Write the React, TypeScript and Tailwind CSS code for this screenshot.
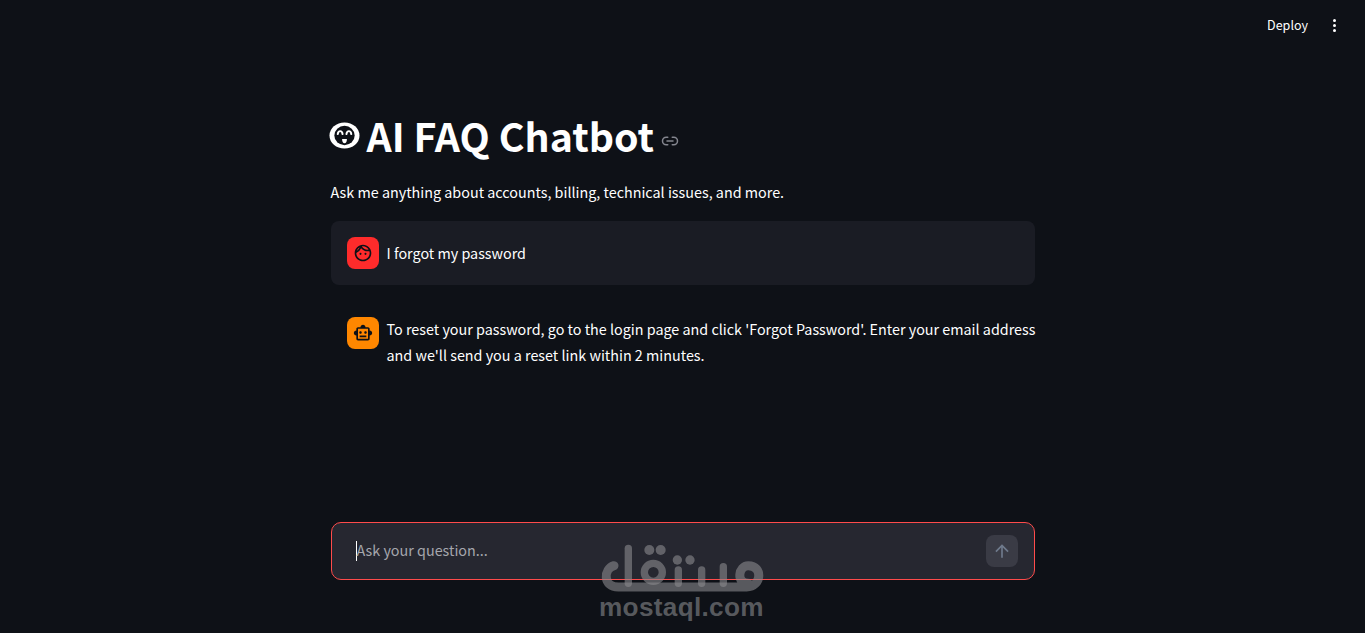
import { Link2 } from "lucide-react";
import { MdArrowUpward, MdOutlineFace, MdOutlineSmartToy } from "react-icons/md";

const RobotEmoji = () => (
  <svg viewBox="0 0 32 32" className="-ml-[2px] mt-[1px] h-[31px] w-[31px] shrink-0">
    <ellipse cx="16" cy="16" rx="15.5" ry="13.5" fill="#fff" />
    <ellipse cx="16" cy="16" rx="10.5" ry="10" fill="#0e1117" />
    <path d="M9 14.500c.6-4 4.500-4 5 0M18 14.500c.6-4 4.500-4 5 0" fill="none" stroke="#fff" strokeWidth="2" strokeLinecap="round" />
    <path d="M13.500 19.500h5c0 2.500-.8 4.500-2.500 4.500s-2.500-2-2.500-4.500z" fill="#fff" />
  </svg>
);

const Watermark = () => (
  <div className="pointer-events-none absolute left-[590px] top-[515px] h-[115px] w-[190px]">
    <svg viewBox="0 0 570 345" className="h-[115px] w-[190px]">
      <g fill="none" stroke="#8a8b8e" strokeOpacity="0.6" strokeWidth="22" strokeLinecap="round" strokeLinejoin="round">
        <path strokeWidth="27" d="M72 152C40 162 38 216 85 216H470C515 216 520 152 475 152C445 152 437 205 475 205" />
        <path d="M115 100V205" />
        <circle cx="190" cy="172" r="27" />
        <path d="M265 165V205M335 165V205M400 155V205" />
      </g>
      <g fill="#8a8b8e" fillOpacity="0.6">
        <circle cx="178" cy="105" r="15" />
        <circle cx="212" cy="105" r="15" />
        <circle cx="262" cy="135" r="14" />
        <circle cx="300" cy="135" r="14" />
      </g>
    </svg>
    <span className="absolute left-[9px] top-[77px] font-['Liberation_Sans',sans-serif] text-[26.2px] font-bold leading-[30px] tracking-[0.3px] whitespace-nowrap text-[#8a8b8e]/60">
      mostaql.com
    </span>
  </div>
);

const ChatMessage = ({ icon, color, children, filled }: { icon: React.ReactNode; color: string; children: React.ReactNode; filled?: boolean }) => (
  <div className={`flex gap-2 rounded-lg py-4 pl-4 ${filled ? "bg-[#1a1c24] pr-4" : ""}`}>
    <div className={`flex h-8 w-8 shrink-0 items-center justify-center rounded-lg text-[20px] text-[#0e1117] ${color}`}>
      {icon}
    </div>
    <p className={`min-h-8 flex-1 text-[14.35px] leading-[26px] text-white ${filled ? "pt-[3px]" : "-mr-1 -mt-px"}`}>{children}</p>
  </div>
);

const App = () => {
  return (
    <div className="relative flex h-[633px] flex-col overflow-hidden bg-[#0e1117] font-['Noto_Sans_CJK_SC','Noto_Sans',sans-serif] text-white">
      <header className="flex h-[50px] shrink-0 items-center justify-end pr-[19px]">
        <span className="mr-[14px] text-[12.53px] leading-[20px]">Deploy</span>
        <div className="flex h-8 w-[24px] flex-col items-center justify-center gap-[2px]">
          <span className="h-[3px] w-[3px] rounded-full bg-white" />
          <span className="h-[3px] w-[3px] rounded-full bg-white" />
          <span className="h-[3px] w-[3px] rounded-full bg-white" />
        </div>
      </header>

      <main className="mx-auto flex w-[704px] flex-1 flex-col">
        <div className="mt-[57px] flex h-[56px] items-center">
          <RobotEmoji />
          <h1 className="ml-[7px] text-[39.3px] leading-[56px] font-bold">AI FAQ Chatbot</h1>
          <Link2 className="ml-[7px] mt-[11px] h-[18px] w-[18px] text-[#84868f]" />
        </div>
        <p className="mt-[16px] text-[14.35px] leading-[26px]">Ask me anything about accounts, billing, technical issues, and more.</p>

        <div className="mt-[16px] flex flex-col gap-4">
          <ChatMessage filled color="bg-[#ff2b2b]" icon={<MdOutlineFace />}>
            I forgot my password
          </ChatMessage>
          <ChatMessage color="bg-[#ff8700]" icon={<MdOutlineSmartToy />}>
            To reset your password, go to the login page and click 'Forgot Password'. Enter your email address and we'll send you a reset link within 2 minutes.
          </ChatMessage>
        </div>

        <div className="mb-[53px] mt-auto flex h-[58px] items-center rounded-[10px] border border-[#ff4b4b] bg-[#262730] pl-[24px] pr-[16px]">
          <span className="h-[20px] w-px bg-white" />
          <span className="-mt-[2px] flex-1 text-[14.35px] leading-[26px] text-[#a5a6ad]">Ask your question...</span>
          <div className="flex h-8 w-8 items-center justify-center rounded-lg bg-[#3a3b45] text-[20px] text-[#6f7a8c]">
            <MdArrowUpward />
          </div>
        </div>
      </main>

      <Watermark />
    </div>
  );
};

export default App;
